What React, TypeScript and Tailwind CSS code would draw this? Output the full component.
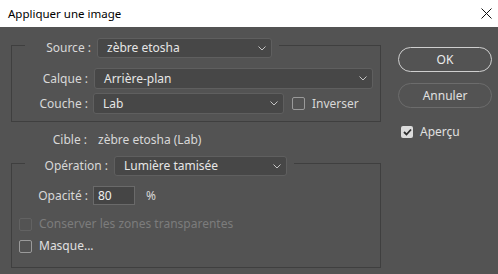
import type { ReactNode } from 'react';

const font = { fontFamily: '"Noto Sans", "Open Sans", sans-serif' };

function Chevron() {
  return (
    <svg width="8" height="5" viewBox="0 0 8 5" className="shrink-0">
      <path d="M0.5 0.5 L4 4 L7.5 0.5" fill="none" stroke="#c4c4c4" strokeWidth="1" />
    </svg>
  );
}

function Dropdown({ value, className }: { value: string; className: string }) {
  return (
    <div
      className={`flex items-center justify-between pl-[9px] pr-[5px] bg-[#474747] border border-[#5f5f5f] rounded-[3px] text-[#e6e6e6] ${className}`}
    >
      <span>{value}</span>
      <Chevron />
    </div>
  );
}

function Checkbox({ checked, disabled }: { checked?: boolean; disabled?: boolean }) {
  if (checked) {
    return (
      <span className="w-[12px] h-[12px] rounded-[2px] bg-[#dcdcdc] flex items-center justify-center shrink-0">
        <svg width="9" height="8" viewBox="0 0 9 8">
          <path d="M1 4 L3.5 6.5 L8 1.5" fill="none" stroke="#2e2e2e" strokeWidth="1.8" />
        </svg>
      </span>
    );
  }
  return (
    <span
      className={`block w-[13px] h-[13px] rounded-[2px] border shrink-0 ${
        disabled ? 'border-[#626262]' : 'border-[#9a9a9a]'
      }`}
    />
  );
}

function Group({ legend, children, className }: { legend: ReactNode; children: ReactNode; className: string }) {
  return (
    <fieldset className={`w-[370px] border border-[#3f3f3f] ${className}`}>
      <legend className="ml-[13px] h-[14px] pr-[7px]">
        <div className="flex items-start">{legend}</div>
      </legend>
      {children}
    </fieldset>
  );
}

export default function App() {
  return (
    <div className="w-[498px] h-[274px] bg-[#535353] flex flex-col text-[12px] text-[#d8d8d8]" style={font}>
      {/* Title bar */}
      <div className="h-[27px] bg-white flex items-center justify-between pl-[8px] pr-[6px] shrink-0">
        <span className="text-black text-[11.5px]">Appliquer une image</span>
        <svg width="11" height="11" viewBox="0 0 11 11">
          <path d="M0.5 0.5 L10.5 10.5 M10.5 0.5 L0.5 10.5" stroke="#111" strokeWidth="1" />
        </svg>
      </div>

      <div className="flex pl-[11px]">
        {/* Left column */}
        <div className="flex flex-col">
          <Group
            className="mt-[11px] pt-[16px] pb-[7px]"
            legend={
              <>
                <span className="w-[72px] h-[20px] flex items-center justify-end pr-[6px]">Source :</span>
                <Dropdown value="zèbre etosha" className="w-[175px] h-[20px]" />
              </>
            }
          >
            <div className="flex items-center h-[21px]">
              <span className="w-[82px] text-right pr-[6px]">Calque :</span>
              <Dropdown value="Arrière-plan" className="w-[279px] h-[21px]" />
            </div>
            <div className="flex items-center h-[21px] mt-[4px]">
              <span className="w-[81px] text-right pr-[5px]">Couche :</span>
              <Dropdown value="Lab" className="w-[191px] h-[21px]" />
              <span className="ml-[8px] mr-[7px]">
                <Checkbox />
              </span>
              <span>Inverser</span>
            </div>
          </Group>

          <div className="flex items-center h-[18px] mt-[9px]">
            <span className="w-[81px] text-right pr-[5px]">Cible :</span>
            <span className="ml-[6px]">zèbre etosha (Lab)</span>
          </div>

          <Group
            className="mt-[7px] pt-[16px] pb-[14px]"
            legend={
              <>
                <span className="w-[89px] h-[20px] flex items-center justify-end pr-[6px]">Opération :</span>
                <Dropdown value="Lumière tamisée" className="w-[173px] h-[20px]" />
              </>
            }
          >
            <div className="flex items-center h-[19px]">
              <span className="w-[81px] text-right pr-[5px]">Opacité :</span>
              <div className="w-[42px] h-[19px] bg-[#454545] border border-[#6a6a6a] flex items-center pl-[4px] text-[#f0f0f0]">
                80
              </div>
              <span className="ml-[11px]">%</span>
            </div>
            <div className="flex items-center h-[14px] mt-[12px] pl-[7px] gap-[7px] text-[#7c7c7c]">
              <Checkbox disabled />
              <span>Conserver les zones transparentes</span>
            </div>
            <div className="flex items-center h-[14px] mt-[8px] pl-[7px] gap-[7px] text-[#e0e0e0]">
              <Checkbox />
              <span>Masque...</span>
            </div>
          </Group>
        </div>

        {/* Right column */}
        <div className="flex flex-col ml-[17px] mt-[20px] w-[94px]">
          <button className="h-[25px] rounded-full border border-[#cfcfcf] text-[#ececec] text-[12px]">OK</button>
          <button className="h-[25px] mt-[11px] rounded-full border border-[#6c6c6c] text-[#e0e0e0] text-[12px]">
            Annuler
          </button>
          <div className="flex items-center h-[20px] mt-[14px] pl-[3px] gap-[7px]">
            <Checkbox checked />
            <span className="text-[#e0e0e0]">Aperçu</span>
          </div>
        </div>
      </div>
    </div>
  );
}
